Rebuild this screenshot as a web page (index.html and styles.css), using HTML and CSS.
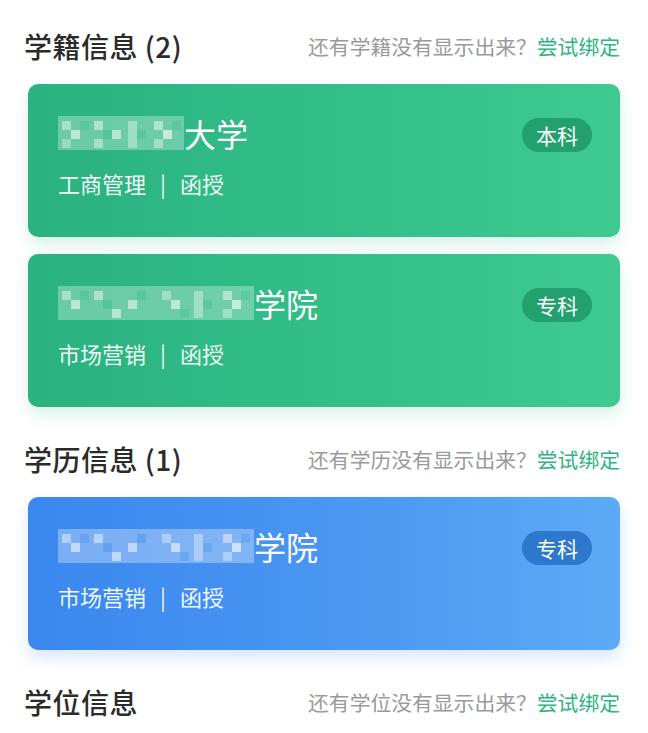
FILE: index.html
```html
<!DOCTYPE html>
<html lang="zh-CN">
<head>
<meta charset="utf-8">
<link rel="stylesheet" href="styles.css">
</head>
<body>
<div class="page">
  <div class="sec-head">
    <div class="sec-title">学籍信息 (2)</div>
    <div class="sec-hint">还有学籍没有显示出来？<span class="bind">尝试绑定</span></div>
  </div>
  <div class="card green">
    <div class="card-main">
      <div class="card-title">
        <svg class="mosaic m-short" viewBox="0 0 126 40">
          <rect x="0" y="3" width="126" height="34" fill="#fff" opacity=".3"/>
          <rect x="4" y="8" width="9" height="9" fill="#fff" opacity=".4"/>
          <rect x="13" y="17" width="9" height="9" fill="#fff" opacity=".55"/>
          <rect x="4" y="26" width="9" height="9" fill="#fff" opacity=".3"/>
          <rect x="22" y="8" width="9" height="9" fill="#0a6" opacity=".15"/>
          <rect x="36" y="8" width="9" height="9" fill="#fff" opacity=".45"/>
          <rect x="45" y="17" width="9" height="9" fill="#0a6" opacity=".2"/>
          <rect x="54" y="17" width="9" height="9" fill="#fff" opacity=".5"/>
          <rect x="36" y="26" width="9" height="9" fill="#fff" opacity=".4"/>
          <rect x="70" y="8" width="9" height="27" fill="#fff" opacity=".35"/>
          <rect x="79" y="17" width="9" height="9" fill="#0a6" opacity=".15"/>
          <rect x="96" y="8" width="9" height="9" fill="#fff" opacity=".45"/>
          <rect x="105" y="17" width="9" height="9" fill="#fff" opacity=".6"/>
          <rect x="114" y="8" width="9" height="9" fill="#0a6" opacity=".15"/>
          <rect x="96" y="26" width="9" height="9" fill="#fff" opacity=".35"/>
        </svg><span>大学</span>
      </div>
      <div class="card-sub">工商管理<span class="sep">|</span>函授</div>
    </div>
    <div class="badge">本科</div>
  </div>
  <div class="card green">
    <div class="card-main">
      <div class="card-title">
        <svg class="mosaic m-long" viewBox="0 0 196 40">
          <rect x="0" y="3" width="196" height="34" fill="#fff" opacity=".3"/>
          <rect x="4" y="8" width="9" height="9" fill="#fff" opacity=".4"/>
          <rect x="13" y="17" width="9" height="9" fill="#fff" opacity=".55"/>
          <rect x="22" y="8" width="9" height="9" fill="#0a6" opacity=".15"/>
          <rect x="36" y="8" width="9" height="9" fill="#fff" opacity=".45"/>
          <rect x="45" y="17" width="9" height="9" fill="#0a6" opacity=".2"/>
          <rect x="54" y="26" width="9" height="9" fill="#fff" opacity=".5"/>
          <rect x="70" y="17" width="9" height="9" fill="#fff" opacity=".5"/>
          <rect x="79" y="8" width="9" height="9" fill="#0a6" opacity=".18"/>
          <rect x="104" y="8" width="9" height="9" fill="#fff" opacity=".35"/>
          <rect x="113" y="17" width="9" height="9" fill="#fff" opacity=".55"/>
          <rect x="122" y="26" width="9" height="9" fill="#0a6" opacity=".15"/>
          <rect x="136" y="8" width="9" height="27" fill="#fff" opacity=".35"/>
          <rect x="145" y="17" width="9" height="9" fill="#0a6" opacity=".15"/>
          <rect x="165" y="8" width="9" height="9" fill="#fff" opacity=".45"/>
          <rect x="174" y="17" width="9" height="9" fill="#fff" opacity=".6"/>
          <rect x="183" y="8" width="9" height="9" fill="#0a6" opacity=".15"/>
          <rect x="165" y="26" width="9" height="9" fill="#fff" opacity=".35"/>
        </svg><span>学院</span>
      </div>
      <div class="card-sub">市场营销<span class="sep">|</span>函授</div>
    </div>
    <div class="badge">专科</div>
  </div>

  <div class="sec-head">
    <div class="sec-title">学历信息 (1)</div>
    <div class="sec-hint">还有学历没有显示出来？<span class="bind">尝试绑定</span></div>
  </div>
  <div class="card blue">
    <div class="card-main">
      <div class="card-title">
        <svg class="mosaic m-long" viewBox="0 0 196 40">
          <rect x="0" y="3" width="196" height="34" fill="#fff" opacity=".32"/>
          <rect x="4" y="8" width="9" height="9" fill="#fff" opacity=".4"/>
          <rect x="13" y="17" width="9" height="9" fill="#fff" opacity=".55"/>
          <rect x="22" y="8" width="9" height="9" fill="#06c" opacity=".15"/>
          <rect x="36" y="8" width="9" height="9" fill="#fff" opacity=".45"/>
          <rect x="45" y="17" width="9" height="9" fill="#06c" opacity=".2"/>
          <rect x="54" y="26" width="9" height="9" fill="#fff" opacity=".5"/>
          <rect x="70" y="17" width="9" height="9" fill="#fff" opacity=".5"/>
          <rect x="79" y="8" width="9" height="9" fill="#06c" opacity=".18"/>
          <rect x="104" y="8" width="9" height="9" fill="#fff" opacity=".35"/>
          <rect x="113" y="17" width="9" height="9" fill="#fff" opacity=".55"/>
          <rect x="122" y="26" width="9" height="9" fill="#06c" opacity=".15"/>
          <rect x="136" y="8" width="9" height="27" fill="#fff" opacity=".35"/>
          <rect x="145" y="17" width="9" height="9" fill="#06c" opacity=".15"/>
          <rect x="165" y="8" width="9" height="9" fill="#fff" opacity=".45"/>
          <rect x="174" y="17" width="9" height="9" fill="#fff" opacity=".6"/>
          <rect x="183" y="8" width="9" height="9" fill="#06c" opacity=".15"/>
          <rect x="165" y="26" width="9" height="9" fill="#fff" opacity=".35"/>
        </svg><span>学院</span>
      </div>
      <div class="card-sub">市场营销<span class="sep">|</span>函授</div>
    </div>
    <div class="badge">专科</div>
  </div>

  <div class="sec-head">
    <div class="sec-title">学位信息</div>
    <div class="sec-hint">还有学位没有显示出来？<span class="bind">尝试绑定</span></div>
  </div>
</div>
</body>
</html>
```
FILE: styles.css
```css
* { box-sizing: border-box; }
html, body { margin: 0; padding: 0; background: #fff; }
body {
  font-family: "Noto Sans CJK SC", "Noto Sans", sans-serif;
  color: #333;
}
.page {
  padding: 8px 28px 0 28px;
  width: 648px;
}
.sec-head {
  height: 76px;
  display: flex;
  align-items: center;
  justify-content: space-between;
}
.sec-title {
  font-size: 28px;
  font-weight: 500;
  color: #2b2b2b;
  margin-left: -4px;
  letter-spacing: 0.5px;
}
.sec-hint {
  font-size: 20.8px;
  color: #9a9a9a;
}
.bind { color: #2fb383; }
.card {
  height: 153px;
  border-radius: 10px;
  display: flex;
  justify-content: space-between;
  align-items: flex-start;
  padding: 27px 28px 0 30px;
  color: #fff;
  margin-bottom: 17px;
}
.card + .sec-head { margin-top: -3px; }
.green {
  background: linear-gradient(90deg, #2ab280 0%, #34c08b 60%, #3fca93 100%);
  box-shadow: 0 8px 16px rgba(43, 179, 128, 0.18);
}
.blue {
  background: linear-gradient(90deg, #3a87ef 0%, #4b97f2 55%, #5daaf6 100%);
  box-shadow: 0 8px 16px rgba(58, 135, 239, 0.2);
}
.card-main { display: flex; flex-direction: column; }
.card-title {
  display: flex;
  align-items: center;
  height: 44px;
  font-size: 32px;
  line-height: 44px;
}
.mosaic { display: block; height: 40px; }
.m-short { width: 126px; }
.m-long { width: 196px; }
.card-sub {
  margin-top: 12px;
  font-size: 22px;
  line-height: 32px;
  color: rgba(255,255,255,0.95);
}
.sep { margin: 0 14px; }
.badge {
  margin-top: 7px;
  height: 34px;
  padding: 0 14px;
  border-radius: 17px;
  font-size: 21px;
  line-height: 34px;
}
.green .badge { background: #22a06e; }
.blue .badge { background: #2d77cc; }
```
